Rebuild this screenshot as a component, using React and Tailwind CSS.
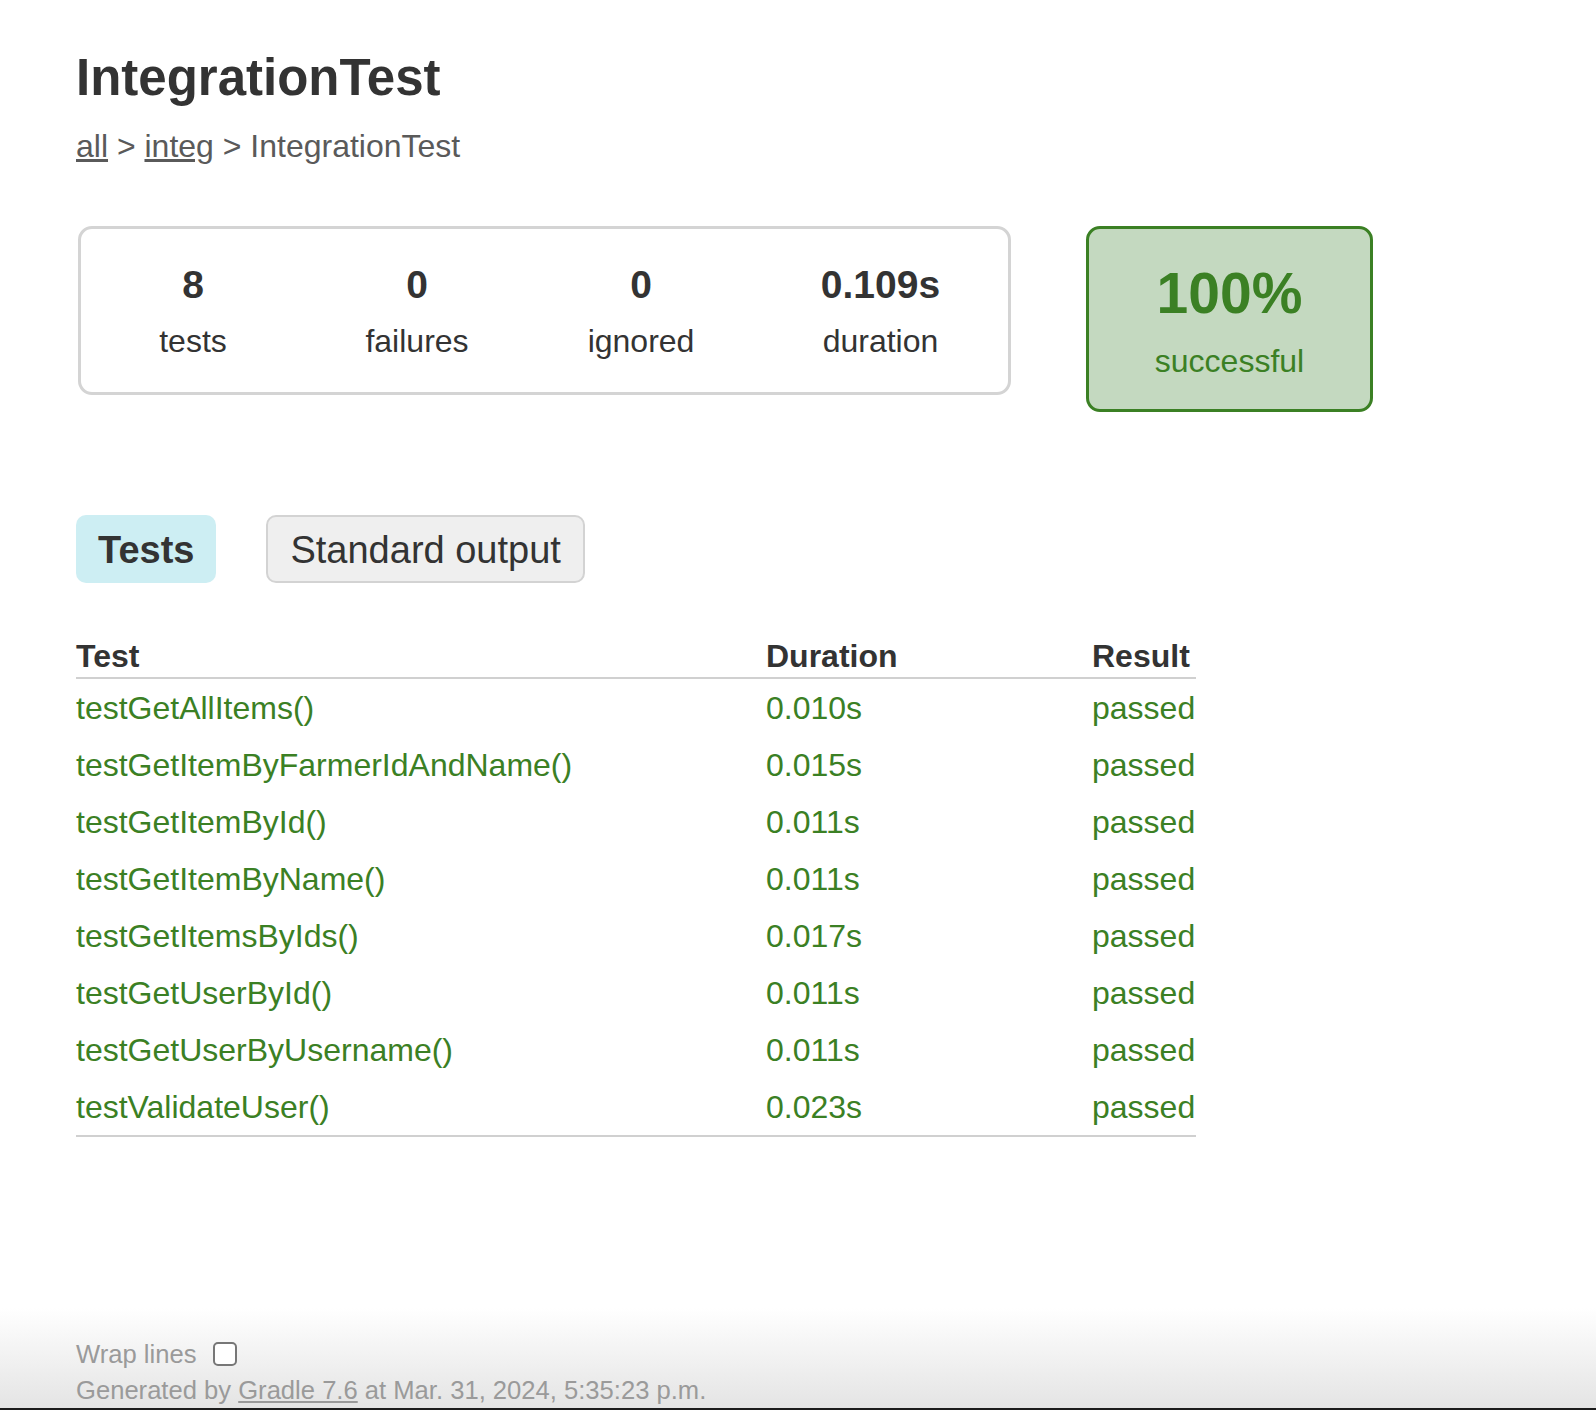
import React from 'react'

const tests = [
  { name: 'testGetAllItems()', duration: '0.010s' },
  { name: 'testGetItemByFarmerIdAndName()', duration: '0.015s' },
  { name: 'testGetItemById()', duration: '0.011s' },
  { name: 'testGetItemByName()', duration: '0.011s' },
  { name: 'testGetItemsByIds()', duration: '0.017s' },
  { name: 'testGetUserById()', duration: '0.011s' },
  { name: 'testGetUserByUsername()', duration: '0.011s' },
  { name: 'testValidateUser()', duration: '0.023s' },
]

const InfoBox = ({ value, label, width }) => (
  <div className={`${width} flex flex-col items-center pt-[32px] pb-[31px]`}>
    <div className="text-[39px] leading-[48px] font-bold text-[#333]">{value}</div>
    <p className="mt-[12px] text-[32px] leading-[40px] text-[#333]">{label}</p>
  </div>
)

const App = () => {
  return (
    <div className="h-[1410px] overflow-hidden flex flex-col bg-white font-['Liberation_Sans',Arial,sans-serif]">
      <div className="pl-[76px] pt-[48px]">
        <h1 className="text-[51px] leading-[60px] font-bold text-[#333]">IntegrationTest</h1>
        <div className="mt-[18px] text-[32px] leading-[40px] text-[#5a5a5a]">
          <a className="underline">all</a> &gt; <a className="underline">integ</a> &gt; IntegrationTest
        </div>

        {/* summary */}
        <div className="mt-[60px] flex items-start">
          <div className="ml-[2px] w-[933px] flex border-[3px] border-[#d4d4d4] rounded-[14px]">
            <InfoBox value="8" label="tests" width="w-[224px]" />
            <InfoBox value="0" label="failures" width="w-[224px]" />
            <InfoBox value="0" label="ignored" width="w-[224px]" />
            <InfoBox value="0.109s" label="duration" width="w-[255px]" />
          </div>
          <div className="ml-[75px] w-[287px] flex flex-col items-center pt-[32px] pb-[28px] border-[3px] border-[#3b8024] bg-[#c4d9c0] rounded-[14px]">
            <div className="text-[57px] leading-[64px] font-bold text-[#3b8024]">100%</div>
            <p className="mt-[16px] text-[32px] leading-[40px] text-[#3b8024]">successful</p>
          </div>
        </div>

        {/* tabs */}
        <div className="mt-[103px] flex items-start gap-[50px]">
          <div className="h-[68px] px-[22px] pt-[2px] flex items-center rounded-[10px] bg-[#cdeef3] text-[38px] font-bold text-[#333]">
            Tests
          </div>
          <div className="h-[68px] px-[22px] pt-[2px] flex items-center rounded-[10px] border-2 border-[#d3d3d3] bg-[#efefef] text-[38px] text-[#333]">
            Standard output
          </div>
        </div>

        {/* table */}
        <div className="mt-[53px] w-[1120px] border-b-2 border-[#d0d0d0]">
          <div className="grid grid-cols-[690px_326px_104px] h-[43px] border-b-2 border-[#d0d0d0] text-[32px] leading-[41px] font-bold text-[#333]">
            <div>Test</div>
            <div>Duration</div>
            <div>Result</div>
          </div>
          {tests.map((t) => (
            <div
              key={t.name}
              className="grid grid-cols-[690px_326px_104px] h-[57px] items-center text-[32px] text-[#3b8024] whitespace-nowrap"
            >
              <div>{t.name}</div>
              <div>{t.duration}</div>
              <div>passed</div>
            </div>
          ))}
        </div>
      </div>

      {/* footer */}
      <div className="mt-auto h-[100px] flex flex-col justify-end pl-[76px] pb-[1px] bg-linear-to-b from-white to-[#e4e4e4] text-[25.6px] leading-[34px] text-[#9a9a9a] whitespace-nowrap">
        <div className="flex items-center gap-[17px]">
          <span>Wrap lines</span>
          <span className="w-[24px] h-[24px] rounded-[5px] border-2 border-[#777] bg-white" />
        </div>
        <div className="mt-[2px]">
          Generated by <a className="underline">Gradle 7.6</a> at Mar. 31, 2024, 5:35:23 p.m.
        </div>
      </div>
      <div className="h-[2px] bg-[#1c1c1c]" />
    </div>
  )
}

export default App
